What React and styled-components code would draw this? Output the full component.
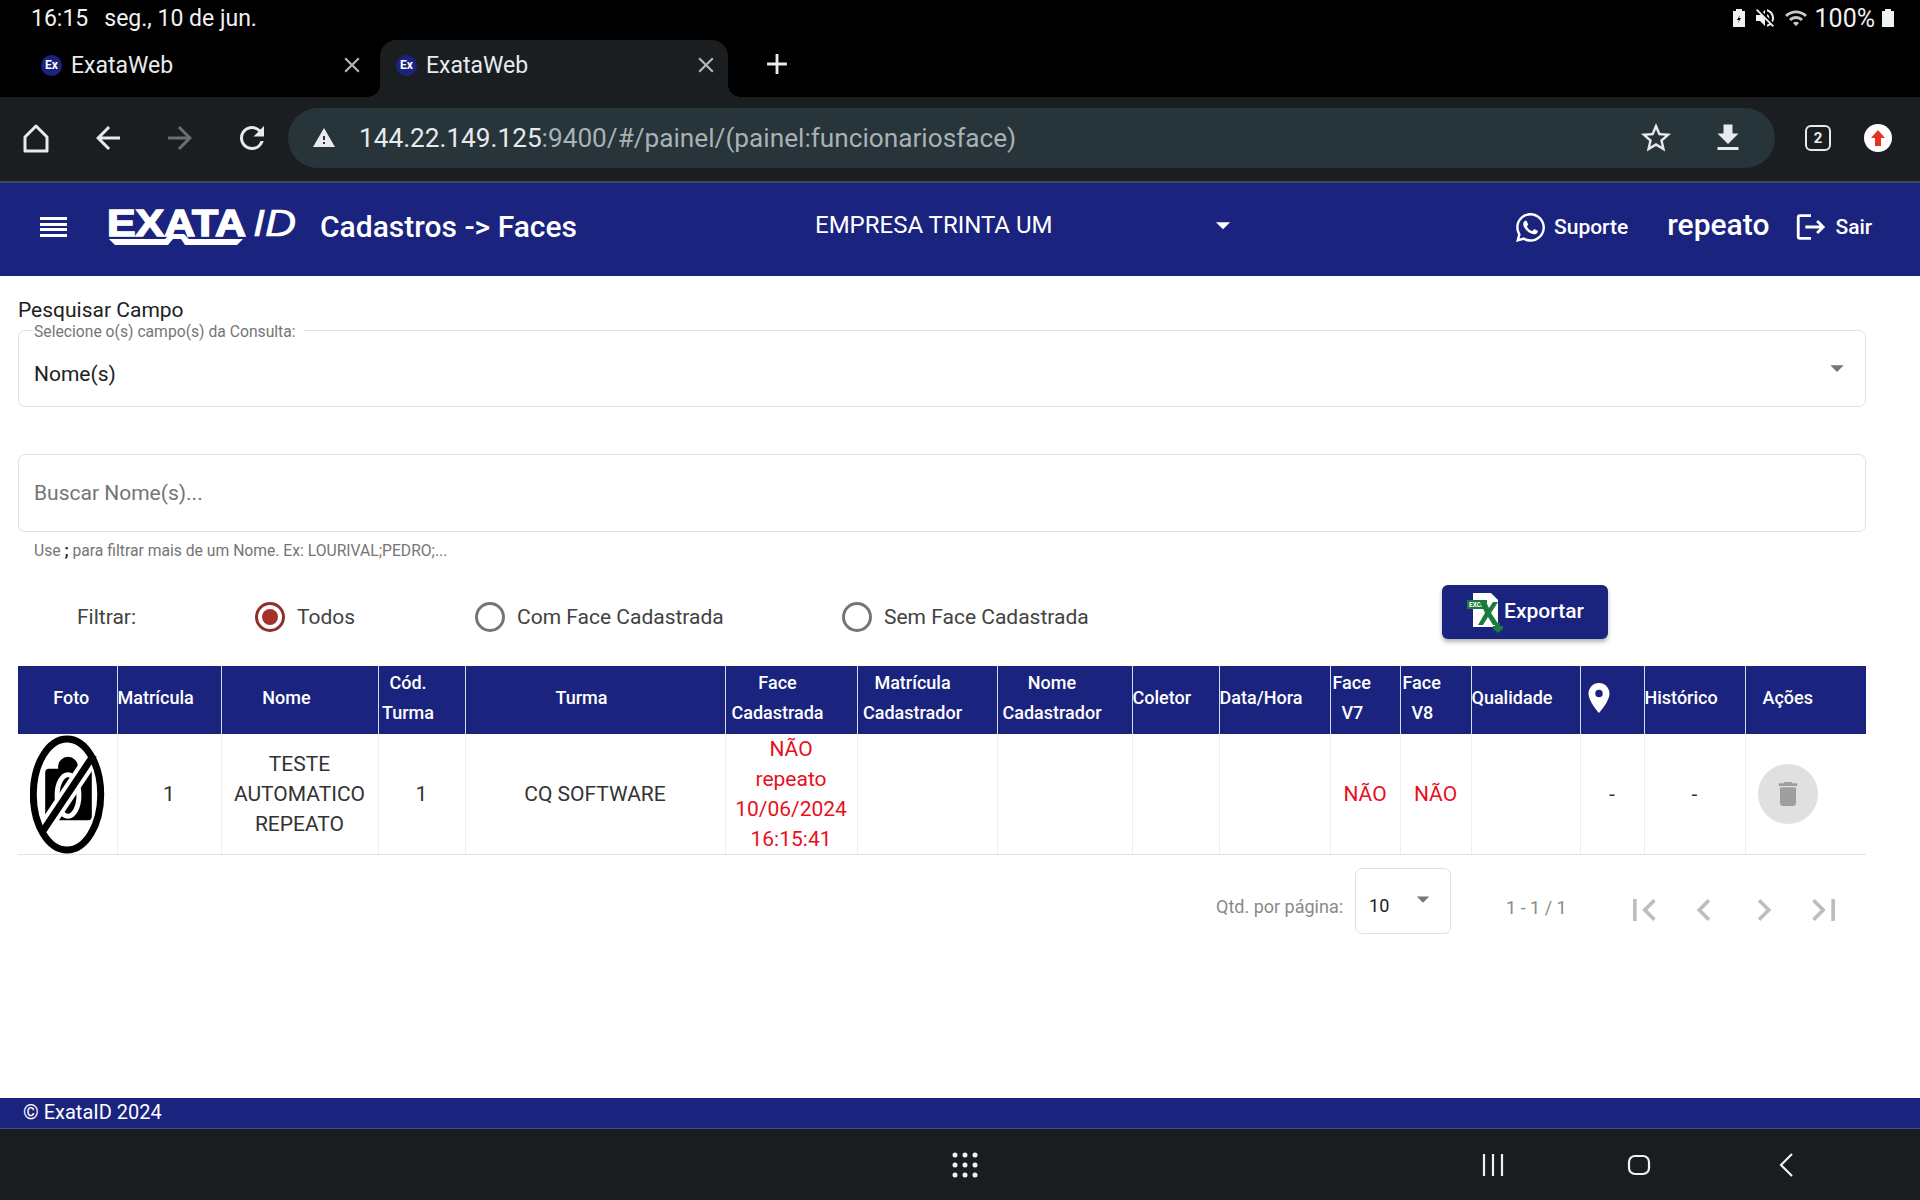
import React from 'react';
import styled, { createGlobalStyle } from 'styled-components';
import {
  MdArrowBack, MdArrowForward, MdRefresh, MdStarBorder, MdFileDownload, MdClose, MdAdd,
  MdWarning, MdArrowDropDown, MdLogout, MdFirstPage, MdLastPage, MdChevronLeft, MdChevronRight,
  MdDelete, MdLocationOn, MdVolumeOff, MdWifi,
} from 'react-icons/md';
import { FaWhatsapp } from 'react-icons/fa';

const GlobalStyle = createGlobalStyle`
  html, body { margin: 0; padding: 0; background: #fff; }
  body { font-family: Roboto, "Liberation Sans", sans-serif; }
  * { box-sizing: border-box; }
`;

const Page = styled.div`
  width: 1920px;
  height: 1200px;
  display: flex;
  flex-direction: column;
  overflow: hidden;
`;

/* android status bar + browser chrome */
const StatusBar = styled.div`
  height: 40px;
  background: #000;
  color: #f1f1f1;
  font-size: 23px;
  display: flex;
  align-items: center;
  justify-content: space-between;
  padding: 0 26px 4px 31px;
`;
const StatusLeft = styled.div`
  display: flex;
  gap: 16px;
`;
const StatusRight = styled.div`
  display: flex;
  align-items: center;
  gap: 7px;
  font-size: 25px;
  svg { display: block; }
`;
const TabStrip = styled.div`
  height: 57px;
  background: #000;
  display: flex;
  align-items: stretch;
`;
const Tab = styled.div`
  position: relative;
  width: ${p => (p.$active ? '348px' : '355px')};
  margin: ${p => (p.$active ? '0' : '2px 0 0 25px')};
  padding: 0 ${p => (p.$active ? '9px' : '15px')} ${p => (p.$active ? '7px' : '9px')} 16px;
  display: flex;
  align-items: center;
  color: #e8eaed;
  font-size: 23px;
  border-radius: 16px 16px 0 0;
  background: ${p => (p.$active ? '#1a1e21' : 'transparent')};
  ${p => p.$active && `
    &::before, &::after {
      content: '';
      position: absolute;
      bottom: 0;
      width: 12px;
      height: 12px;
    }
    &::before {
      left: -12px;
      background: radial-gradient(circle at 0 0, #000 11.5px, #1a1e21 12px);
    }
    &::after {
      right: -12px;
      background: radial-gradient(circle at 100% 0, #000 11.5px, #1a1e21 12px);
    }
  `}
`;
const Favicon = styled.span`
  width: 21px;
  height: 21px;
  border-radius: 50%;
  background: #1a237e;
  color: #fff;
  font-size: 12px;
  font-weight: 700;
  display: flex;
  align-items: center;
  justify-content: center;
  margin-right: 9px;
`;
const TabTitle = styled.span`
  flex: 1;
`;
const TabClose = styled(MdClose)`
  color: #b5b8ba;
  font-size: 26px;
`;
const NewTab = styled(MdAdd)`
  color: #e8eaed;
  font-size: 34px;
  margin: 7px 0 auto 32px;
`;
const Toolbar = styled.div`
  height: 84px;
  background: #1a1e21;
  display: flex;
  align-items: center;
  color: #e8eaed;
  padding-bottom: 2px;
`;
const ToolButton = styled.span`
  width: 72px;
  display: flex;
  justify-content: center;
  font-size: 36px;
  color: ${p => (p.$off ? '#6b6f72' : '#e8eaed')};
`;
const Omnibox = styled.div`
  width: 1487px;
  height: 60px;
  border-radius: 30px;
  background: #27343a;
  display: flex;
  align-items: center;
  padding: 0 11px 0 24px;
  font-size: 26.2px;
`;
const UrlHost = styled.span`
  color: #e8eaed;
  margin-left: 23px;
`;
const UrlPath = styled.span`
  color: #a9b1b5;
  flex: 1;
`;
const OmniIcon = styled.span`
  width: 72px;
  display: flex;
  justify-content: center;
  font-size: 36px;
`;
const TabCount = styled.span`
  width: 26px;
  height: 26px;
  margin-left: 30px;
  border: 2.5px solid #e8eaed;
  border-radius: 6px;
  font-size: 15px;
  font-weight: 700;
  display: flex;
  align-items: center;
  justify-content: center;
`;
const UpdateBadge = styled.span`
  width: 28px;
  height: 28px;
  margin-left: 33px;
  border-radius: 50%;
  background: #fff;
  display: flex;
  align-items: center;
  justify-content: center;
`;

/* app header */
const Header = styled.header`
  height: 95px;
  background: #1a237e;
  border-top: 2px solid #3d4a55;
  color: #fff;
  display: flex;
  align-items: center;
  padding: 0 0 5px 40px;
`;
const Burger = styled.span`
  width: 27px;
  height: 20px;
  display: flex;
  flex-direction: column;
  justify-content: space-between;
  i { display: block; height: 3px; background: #fff; }
`;
const Logo = styled.svg`
  width: 190px;
  height: 46px;
  margin-left: 40px;
  overflow: visible;
`;
const Title = styled.div`
  font-size: 30px;
  font-weight: 500;
  margin: -2px 0 0 23px;
  width: 495px;
`;
const Company = styled.div`
  font-size: 24px;
  width: 391px;
  margin-top: -4px;
`;
const CompanyArrow = styled(MdArrowDropDown)`
  font-size: 34px;
  margin-top: -4px;
`;
const Support = styled.div`
  display: flex;
  align-items: center;
  gap: 7px;
  margin-left: 274px;
  font-size: 21px;
  font-weight: 500;
  svg { font-size: 33px; }
`;
const UserName = styled.div`
  font-size: 30px;
  font-weight: 500;
  margin-left: 39px;
  margin-top: -5px;
`;
const Logout = styled.div`
  display: flex;
  align-items: center;
  gap: 7px;
  margin-left: 25px;
  font-size: 21px;
  font-weight: 500;
`;

/* content */
const Main = styled.main`
  flex: 1;
  background: #fff;
  padding: 19px 54px 0 18px;
  display: flex;
  flex-direction: column;
`;
const SectionLabel = styled.div`
  font-size: 21px;
  line-height: 31px;
  color: #212121;
`;
const FieldSet = styled.fieldset`
  margin: 0;
  padding: 0 15px;
  height: 81px;
  border: 1px solid #e0e0e0;
  border-radius: 7px;
`;
const Legend = styled.legend`
  font-size: 15.7px;
  color: #757575;
  padding: 0 8px 0 0;
  margin-left: 0;
  line-height: 11px;
  height: 8px;
`;
const FieldRow = styled.div`
  height: 72px;
  padding-top: 3px;
  display: flex;
  align-items: center;
  justify-content: space-between;
`;
const SelectValue = styled.span`
  font-size: 21px;
  color: #212121;
  margin-top: 5px;
`;
const SelectArrow = styled(MdArrowDropDown)`
  font-size: 32px;
  color: #757575;
  margin: -8px -3px 0 0;
`;
const SearchBox = styled.div`
  height: 78px;
  margin-top: 47px;
  border: 1px solid #e0e0e0;
  border-radius: 7px;
  padding: 0 15px 1px;
  display: flex;
  align-items: center;
  font-size: 21px;
  color: #757575;
`;
const Hint = styled.div`
  margin: 9px 0 0 16px;
  font-size: 15.7px;
  line-height: 20px;
  color: #757575;
  b { color: #212121; }
`;
const FilterRow = styled.div`
  display: grid;
  grid-template-columns: 178px 220px 367px 600px 166px;
  align-items: center;
  padding-left: 59px;
  margin-top: 32px;
  height: 48px;
`;
const FilterLabel = styled.span`
  font-size: 21px;
  color: #424242;
`;
const RadioOption = styled.label`
  display: flex;
  align-items: center;
  gap: 12px;
  font-size: 21px;
  color: #424242;
`;
const RadioCircle = styled.span`
  width: 30px;
  height: 30px;
  border-radius: 50%;
  border: 3px solid ${p => (p.$checked ? '#8e2f2a' : '#757575')};
  display: flex;
  align-items: center;
  justify-content: center;
  &::after {
    content: '';
    width: 16px;
    height: 16px;
    border-radius: 50%;
    background: ${p => (p.$checked ? '#a5322a' : 'transparent')};
  }
`;
const ExportButton = styled.button`
  height: 54px;
  margin-top: -10px;
  border: none;
  border-radius: 6px;
  background: #1a237e;
  color: #fff;
  font: 500 21px Roboto, sans-serif;
  display: flex;
  align-items: center;
  justify-content: center;
  padding: 0;
  box-shadow: 0 3px 4px rgba(0, 0, 0, 0.3);
  span { margin-top: -2px; }
`;

const Table = styled.table`
  width: 1848px;
  margin-top: 25px;
  border-collapse: collapse;
  table-layout: fixed;
`;
const Th = styled.th`
  height: 68px;
  padding: 0 ${p => p.$pr || 0}px 4px ${p => p.$pl || 0}px;
  background: #1a237e;
  color: #fff;
  font-size: 18px;
  font-weight: 500;
  line-height: 30px;
  text-align: ${p => p.$align || 'center'};
  border-left: 1px solid #d8daea;
  &:first-child { border-left: none; }
  white-space: nowrap;
  svg { font-size: 36px; display: block; margin: 0; }
`;
const Td = styled.td`
  height: 120px;
  padding: 0;
  font-size: 21px;
  line-height: 30px;
  text-align: center;
  color: ${p => (p.$red ? '#e8101c' : '#333')};
  border-left: 1px solid #eeeeee;
  border-bottom: 1px solid #e0e0e0;
  &:first-child { border-left: none; }
`;
const NoPhoto = styled.svg`
  display: block;
  width: 76px;
  height: 119px;
  margin-left: 12px;
`;
const TrashButton = styled.span`
  width: 60px;
  height: 60px;
  margin-left: 12px;
  border-radius: 50%;
  background: #e0e0e0;
  color: #9e9e9e;
  font-size: 32px;
  display: flex;
  align-items: center;
  justify-content: center;
`;

const Pager = styled.div`
  display: flex;
  align-items: center;
  margin-top: 13px;
  padding-left: 1198px;
  color: #8a8a8a;
  font-size: 18px;
`;
const PagerLabel = styled.span`
  margin-top: 10px;
`;
const PageSize = styled.div`
  width: 96px;
  height: 66px;
  margin-left: 12px;
  padding: 8px 12px 0 13px;
  border: 1px solid #e0e0e0;
  border-radius: 7px;
  display: flex;
  align-items: center;
  justify-content: space-between;
  font-size: 18px;
  color: #212121;
  svg { font-size: 30px; color: #757575; margin-top: -12px; }
`;
const PageRange = styled.span`
  margin: 13px 0 0 55px;
  width: 116px;
`;
const PageIcons = styled.div`
  display: flex;
  gap: 16px;
  margin-top: 17px;
  color: #bdbdbd;
  font-size: 44px;
  svg { display: block; }
`;

const Footer = styled.footer`
  height: 30px;
  background: #1a237e;
  color: #fff;
  font-size: 20px;
  padding-left: 23px;
  line-height: 28px;
`;
const NavBar = styled.div`
  height: 72px;
  background: #1a1d1f;
  border-top: 1px solid #4a4f73;
  display: flex;
  align-items: center;
  padding-left: 952px;
`;
const NavSlot = styled.svg`
  display: block;
  margin-right: ${p => p.$gap}px;
`;

const columns = [
  { w: 99, t: ['Foto'], pl: 8 },
  { w: 104, t: ['Matrícula'], align: 'left' },
  { w: 157, t: ['Nome'], pr: 26 },
  { w: 87, t: ['Cód.', 'Turma'], pr: 27 },
  { w: 260, t: ['Turma'], pr: 27 },
  { w: 132, t: ['Face', 'Cadastrada'], pr: 27 },
  { w: 140, t: ['Matrícula', 'Cadastrador'], pr: 29 },
  { w: 135, t: ['Nome', 'Cadastrador'], pr: 25 },
  { w: 87, t: ['Coletor'], align: 'left' },
  { w: 111, t: ['Data/Hora'], align: 'left' },
  { w: 70, t: ['Face', '\u00a0\u00a0V7'], align: 'left', pl: 2 },
  { w: 71, t: ['Face', '\u00a0\u00a0V8'], align: 'left', pl: 2 },
  { w: 109, t: ['Qualidade'], align: 'left' },
  { w: 64, icon: true, align: 'left' },
  { w: 101, t: ['Histórico'], align: 'left' },
  { w: 121, t: ['Ações'], pr: 36 },
];

const ExcelIcon = () => (
  <svg width="38" height="42" viewBox="0 0 38 42">
    <path d="M7 2h18l7 7v27H7z" fill="#fff" />
    <rect x="1" y="9" width="20" height="9" fill="#1b7a3d" />
    <text x="3" y="16" fontFamily="Roboto" fontSize="6.5" fontWeight="700" fill="#fff">EXCEL</text>
    <path d="M14 11h6l3 6 4-6h5l-7 11 8 12h-6l-5-8-5 8h-5l7-12z" fill="#1b7a3d" />
    <path d="M29 32h5v3h3v3l-5 4-5-4v-3h2z" fill="#1b7a3d" />
  </svg>
);

const App = () => (
  <Page>
    <GlobalStyle />
    <StatusBar>
      <StatusLeft><span>16:15</span><span>seg., 10 de jun.</span></StatusLeft>
      <StatusRight>
        <svg width="14" height="20" viewBox="0 0 14 20"><path d="M4 1h6v2h3v16H1V3h3z" fill="#f1f1f1" /><path d="M8 7l-3 5h2l-1 3 3-5H7z" fill="#000" /></svg>
        <MdVolumeOff size={24} color="#f1f1f1" />
        <MdWifi size={24} color="#c8c8c8" />
        <span>100%</span>
        <svg width="12" height="20" viewBox="0 0 12 20"><path d="M3 1h6v2h3v16H0V3h3z" fill="#f1f1f1" /></svg>
      </StatusRight>
    </StatusBar>
    <TabStrip>
      <Tab>
        <Favicon>Ex</Favicon><TabTitle>ExataWeb</TabTitle><TabClose />
      </Tab>
      <Tab $active>
        <Favicon>Ex</Favicon><TabTitle>ExataWeb</TabTitle><TabClose />
      </Tab>
      <NewTab />
    </TabStrip>
    <Toolbar>
      <ToolButton>
        <svg width="36" height="36" viewBox="0 0 36 36" fill="none" stroke="#e8eaed" strokeWidth="3" strokeLinejoin="round">
          <path d="M18 6L7 17v14h22V17z" />
        </svg>
      </ToolButton>
      <ToolButton><MdArrowBack /></ToolButton>
      <ToolButton $off><MdArrowForward /></ToolButton>
      <ToolButton><MdRefresh /></ToolButton>
      <Omnibox>
        <MdWarning size={24} color="#e8eaed" />
        <UrlHost>144.22.149.125</UrlHost>
        <UrlPath>:9400/#/painel/(painel:funcionariosface)</UrlPath>
        <OmniIcon><MdStarBorder /></OmniIcon>
        <OmniIcon><MdFileDownload /></OmniIcon>
      </Omnibox>
      <TabCount>2</TabCount>
      <UpdateBadge>
        <svg width="16" height="18" viewBox="0 0 16 18"><path d="M8 1l7 8h-4v8H5V9H1z" fill="#e53224" /></svg>
      </UpdateBadge>
    </Toolbar>
    <Header>
      <Burger><i /><i /><i /><i /></Burger>
      <Logo viewBox="0 0 190 46">
        <text x="0" y="32" fontFamily="Liberation Sans" fontWeight="700" fontSize="36" textLength="139" lengthAdjust="spacingAndGlyphs" fill="#fff" stroke="#fff" strokeWidth="1.4">EXATA</text>
        <text x="146" y="32" fontFamily="Liberation Sans" fontStyle="italic" fontSize="36" textLength="43" lengthAdjust="spacingAndGlyphs" fill="#fff" stroke="#fff" strokeWidth="0.6">ID</text>
        <path d="M2 35h56l5-5h14l5 5h54l-6 6H78l-4-6H66l-5 6H8z" fill="#fff" />
      </Logo>
      <Title>Cadastros -&gt; Faces</Title>
      <Company>EMPRESA TRINTA UM</Company>
      <CompanyArrow />
      <Support><FaWhatsapp />Suporte</Support>
      <UserName>repeato</UserName>
      <Logout><MdLogout size={34} />Sair</Logout>
    </Header>
    <Main>
      <SectionLabel>Pesquisar Campo</SectionLabel>
      <FieldSet>
        <Legend>Selecione o(s) campo(s) da Consulta:</Legend>
        <FieldRow>
          <SelectValue>Nome(s)</SelectValue>
          <SelectArrow />
        </FieldRow>
      </FieldSet>
      <SearchBox>Buscar Nome(s)...</SearchBox>
      <Hint>Use <b>;</b> para filtrar mais de um Nome. Ex: LOURIVAL;PEDRO;...</Hint>
      <FilterRow>
        <FilterLabel>Filtrar:</FilterLabel>
        <RadioOption><RadioCircle $checked />Todos</RadioOption>
        <RadioOption><RadioCircle />Com Face Cadastrada</RadioOption>
        <RadioOption><RadioCircle />Sem Face Cadastrada</RadioOption>
        <ExportButton><ExcelIcon /><span>Exportar</span></ExportButton>
      </FilterRow>
      <Table>
        <colgroup>
          {columns.map((c, i) => <col key={i} style={{ width: c.w }} />)}
        </colgroup>
        <thead>
          <tr>
            {columns.map((c, i) => (
              <Th key={i} $align={c.align} $pr={c.pr} $pl={c.pl}>
                {c.icon ? <MdLocationOn /> : c.t.map((l, j) => <div key={j}>{l}</div>)}
              </Th>
            ))}
          </tr>
        </thead>
        <tbody>
          <tr>
            <Td>
              <NoPhoto viewBox="0 0 76 120">
                <path d="M15 38a4 4 0 0 1 4-4h9v-2a10 10 0 0 1 20 0v2h10a4 4 0 0 1 4 4v44a4 4 0 0 1-4 4H19a4 4 0 0 1-4-4z" fill="#000" />
                <ellipse cx="38" cy="61" rx="11" ry="21" fill="none" stroke="#fff" strokeWidth="5" />
                <line x1="12" y1="98" x2="64" y2="20" stroke="#fff" strokeWidth="15" />
                <line x1="12" y1="98" x2="64" y2="20" stroke="#000" strokeWidth="7" />
                <ellipse cx="37" cy="60" rx="34" ry="56" fill="none" stroke="#000" strokeWidth="7" />
              </NoPhoto>
            </Td>
            <Td>1</Td>
            <Td>TESTE<br />AUTOMATICO<br />REPEATO</Td>
            <Td>1</Td>
            <Td>CQ SOFTWARE</Td>
            <Td $red>NÃO<br />repeato<br />10/06/2024<br />16:15:41</Td>
            <Td /><Td /><Td /><Td />
            <Td $red>NÃO</Td>
            <Td $red>NÃO</Td>
            <Td />
            <Td>-</Td>
            <Td>-</Td>
            <Td><TrashButton><MdDelete /></TrashButton></Td>
          </tr>
        </tbody>
      </Table>
      <Pager>
        <PagerLabel>Qtd. por página:</PagerLabel>
        <PageSize>10<MdArrowDropDown /></PageSize>
        <PageRange>1 - 1 / 1</PageRange>
        <PageIcons><MdFirstPage /><MdChevronLeft /><MdChevronRight /><MdLastPage /></PageIcons>
      </Pager>
    </Main>
    <Footer>© ExataID 2024</Footer>
    <NavBar>
      <NavSlot width="26" height="26" viewBox="0 0 26 26" $gap={503}>
        {[3, 13, 23].flatMap(y => [3, 13, 23].map(x => <circle key={`${x}-${y}`} cx={x} cy={y} r="2.5" fill="#f1f1f1" />))}
      </NavSlot>
      <NavSlot width="24" height="24" viewBox="0 0 24 24" $gap={122}>
        <path d="M3 1v22M12 1v22M21 1v22" stroke="#f1f1f1" strokeWidth="2.2" />
      </NavSlot>
      <NavSlot width="24" height="24" viewBox="0 0 24 24" $gap={127}>
        <rect x="2" y="3" width="20" height="18" rx="6" fill="none" stroke="#f1f1f1" strokeWidth="2.2" />
      </NavSlot>
      <NavSlot width="16" height="24" viewBox="0 0 16 24" $gap={0}>
        <path d="M14 1L3 12l11 11" fill="none" stroke="#f1f1f1" strokeWidth="2.2" />
      </NavSlot>
    </NavBar>
  </Page>
);

export default App;
